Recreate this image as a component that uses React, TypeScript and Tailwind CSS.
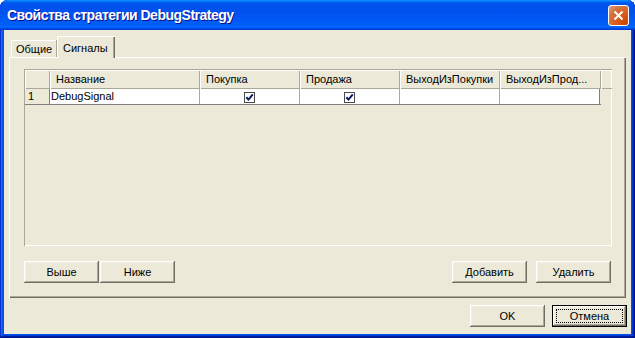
import React from "react";

const btn =
  "w-[75px] h-[22px] flex items-center justify-center bg-[#ECE9D8] text-black text-[11px] shadow-[inset_-1px_-1px_#716F64,inset_1px_1px_#FFFFFF,inset_-2px_-2px_#ACA899,inset_2px_2px_#F1EFE2]";

function Check() {
  return (
    <svg width="11" height="11" viewBox="0 0 11 11">
      <rect x="0.5" y="0.5" width="10" height="10" fill="#fff" stroke="#4b4b4b" />
      <path d="M2.3 5.3 L4.5 7.6 L8.8 2.3" fill="none" stroke="#0b1a66" strokeWidth="2" />
    </svg>
  );
}

export default function App() {
  const cols = [
    { w: "w-[150px]", t: "Название" },
    { w: "w-[100px]", t: "Покупка" },
    { w: "w-[100px]", t: "Продажа" },
    { w: "w-[100px]", t: "ВыходИзПокупки" },
    { w: "w-[101px]", t: "ВыходИзПрод..." },
  ];
  return (
    <div
      className="w-[635px] h-[338px] rounded-t-[8px] overflow-hidden flex flex-col bg-[#0055E5] shadow-[inset_-1px_-1px_#00138C,inset_1px_1px_#0831D9,inset_-2px_-2px_#001EA0,inset_2px_2px_#166AEE,inset_-3px_-3px_#003BDA,inset_3px_3px_#0855DD]"
      style={{ fontFamily: '"Liberation Sans", Arial, sans-serif' }}
    >
      {/* Title bar */}
      <div className="h-[30px] shrink-0 flex items-center justify-between pl-[7px] pr-[6px] bg-[linear-gradient(to_bottom,#0997FF_0%,#0053EE_10%,#0050EE_40%,#0060FA_85%,#0066FF_90%,#005BFF_93%,#003DD7_96%,#003DD7_100%)]">
        <span className="text-white font-bold text-[14px] [text-shadow:1px_1px_#0F1089] tracking-[-0.5px]">
          Свойства стратегии DebugStrategy
        </span>
        <div className="w-[21px] h-[21px] rounded-[3px] border border-white bg-[radial-gradient(circle_at_90%_90%,#CC4600_0%,#DC6527_55%,#CD7546_70%,#E5A07C_100%)] flex items-center justify-center">
          <svg width="11" height="11" viewBox="0 0 11 11">
            <path d="M1.5 1.5 L9.5 9.5 M9.5 1.5 L1.5 9.5" stroke="#fff" strokeWidth="2" />
          </svg>
        </div>
      </div>

      {/* Client */}
      <div className="flex-1 mx-[4px] mb-[4px] bg-[#ECE9D8] flex flex-col text-[11px] text-black">
        {/* Tabs */}
        <div className="mt-[6px] ml-[7px] h-[21px] flex items-end">
          <div className="h-[17px] w-[46px] flex items-center pl-[5px] pt-[1px] shadow-[inset_1px_1px_#FFFFFF] border-r border-[#ACA899]">
            Общие
          </div>
          <div className="relative z-10 -mb-[1px] h-[22px] w-[58px] flex items-start pt-[4px] pl-[6px] bg-[#ECE9D8] shadow-[inset_1px_1px_#FFFFFF,inset_-1px_0_#716F64,inset_-2px_0_#ACA899]">
            Сигналы
          </div>
        </div>

        {/* Panel */}
        <div className="ml-[5px] w-[617px] h-[241px] flex flex-col pt-[12px] pl-[15px] shadow-[inset_1px_1px_#FFFFFF,inset_-1px_-1px_#716F64,inset_-2px_-2px_#ACA899]">
          {/* Grid */}
          <div className="w-[588px] h-[177px] flex flex-col shadow-[inset_1px_1px_#ACA899,inset_-1px_-1px_#FFFFFF]">
            <div className="flex h-[19px] mt-[1px] ml-[1px]">
              <div className="w-[25px] h-full shadow-[inset_1px_1px_#FFFFFF,inset_-1px_-1px_#ACA899]" />
              {cols.map((c) => (
                <div
                  key={c.t}
                  className={`${c.w} h-full flex items-center pl-[6px] shadow-[inset_1px_1px_#FFFFFF,inset_-1px_-1px_#ACA899] whitespace-nowrap`}
                >
                  {c.t}
                </div>
              ))}
              <div className="flex-1 h-full shadow-[inset_1px_1px_#FFFFFF,inset_0_-1px_#ACA899]" />
            </div>
            <div className="flex h-[16px] ml-[1px] w-[576px] border-b border-[#808080]">
              <div className="w-[25px] h-full flex items-center pl-[3px] border-r border-[#808080]">1</div>
              <div className="w-[150px] h-full bg-white flex items-center pl-[1px] border-r border-[#ACA899]">
                DebugSignal
              </div>
              <div className="w-[100px] h-full bg-white flex items-center justify-center border-r border-[#ACA899] pt-[1px]">
                <Check />
              </div>
              <div className="w-[100px] h-full bg-white flex items-center justify-center border-r border-[#ACA899] pt-[1px]">
                <Check />
              </div>
              <div className="w-[100px] h-full bg-white border-r border-[#ACA899]" />
              <div className="w-[100px] h-full bg-white border-r border-[#808080]" />
            </div>
          </div>

          {/* Panel buttons */}
          <div className="mt-[15px] w-[588px] flex">
            <div className={btn}>Выше</div>
            <div className={`${btn} ml-[1px]`}>Ниже</div>
            <div className={`${btn} ml-auto mr-[9px]`}>Добавить</div>
            <div className={`${btn} mr-[1px]`}>Удалить</div>
          </div>
        </div>

        {/* Footer */}
        <div className="mt-[7px] flex justify-end gap-[7px] pr-[4px]">
          <div className={btn}>OK</div>
          <div className="w-[75px] h-[22px] relative flex items-center justify-center bg-[#ECE9D8] text-black text-[11px] border border-black shadow-[inset_-1px_-1px_#716F64,inset_1px_1px_#FFFFFF,inset_-2px_-2px_#ACA899,inset_2px_2px_#F1EFE2]">
            <div className="absolute inset-[3px] border border-dotted border-black" />
            Отмена
          </div>
        </div>
      </div>
    </div>
  );
}
